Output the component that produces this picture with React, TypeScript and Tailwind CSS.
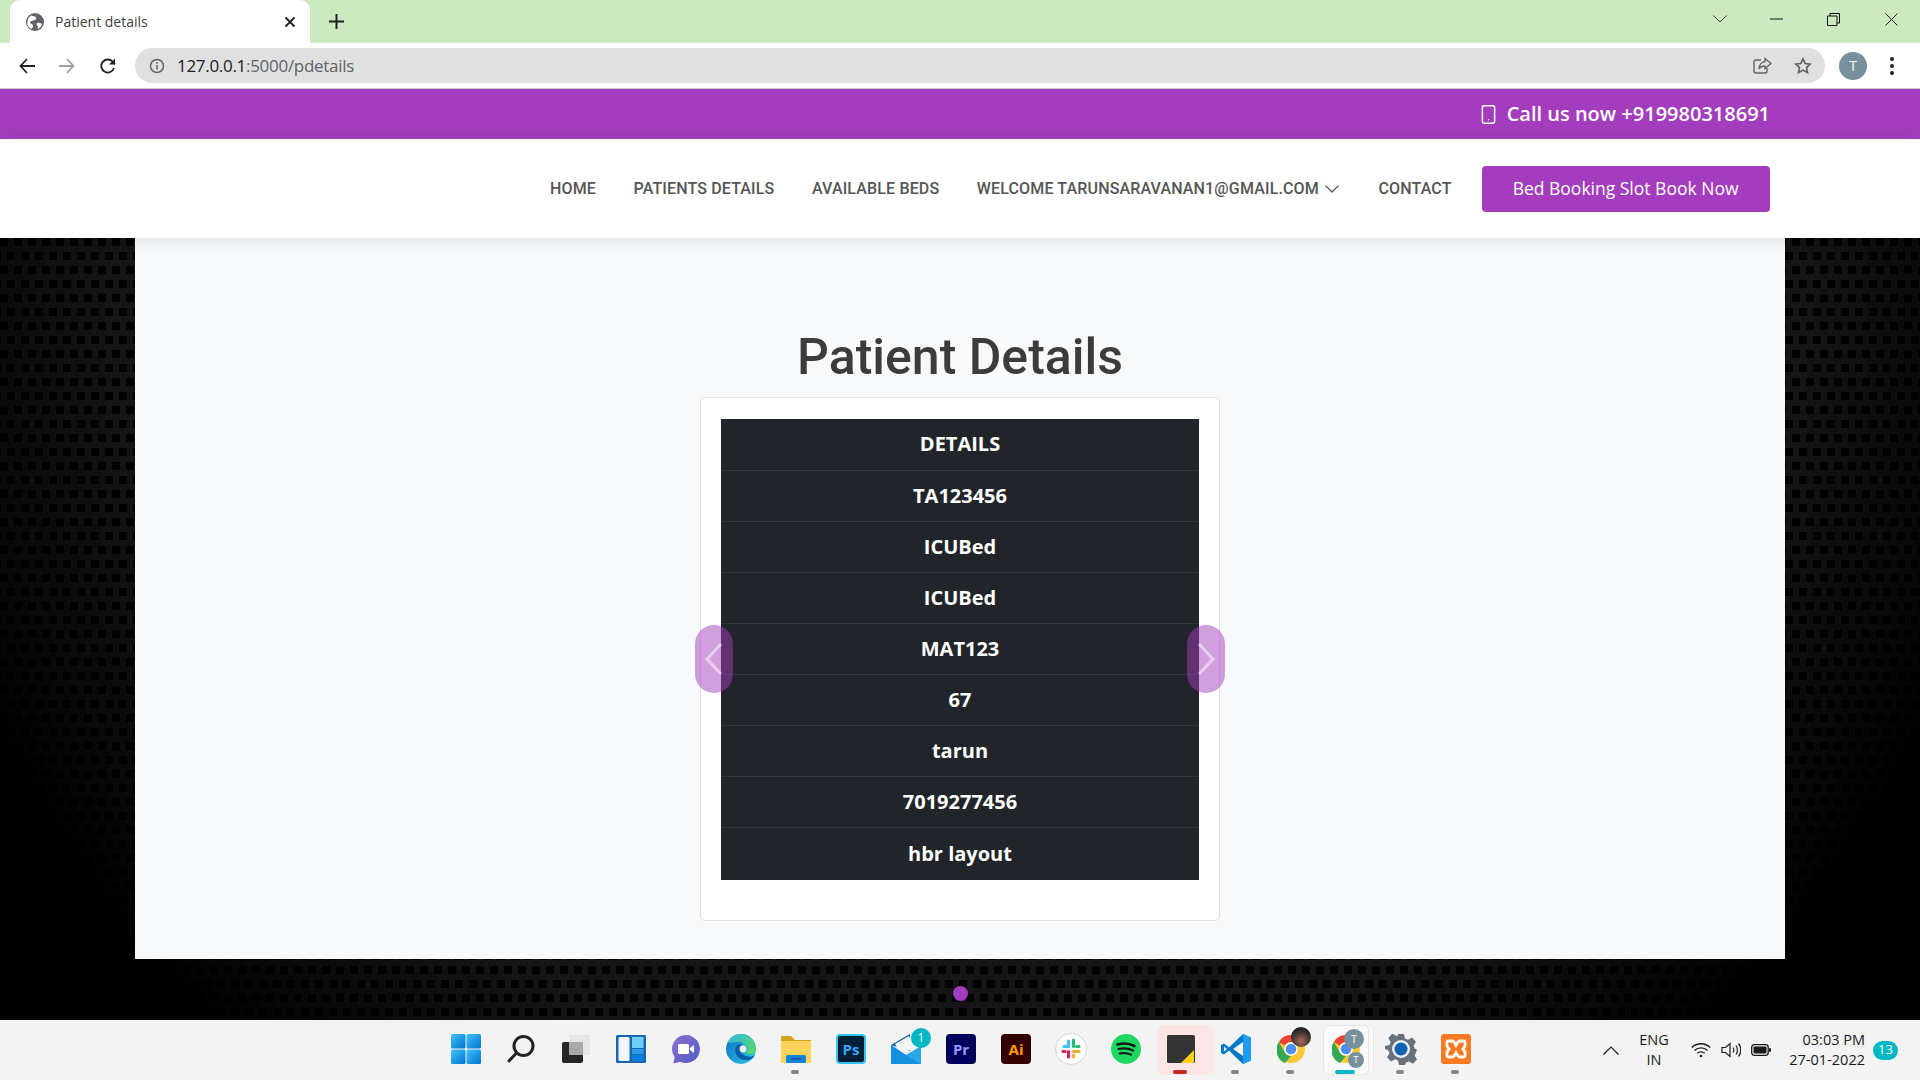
import { ChevronDown, Smartphone } from "lucide-react";

const rows = ["DETAILS", "TA123456", "ICUBed", "ICUBed", "MAT123", "67", "tarun", "7019277456", "hbr layout"];

const navLinks = ["HOME", "PATIENTS DETAILS", "AVAILABLE BEDS"];

const WindowsIcon = () => (
  <svg width="30" height="30" viewBox="0 0 30 30">
    <defs>
      <linearGradient id="win" x1="0" y1="0" x2="1" y2="1">
        <stop offset="0" stopColor="#3fc3f7" />
        <stop offset="1" stopColor="#0372cf" />
      </linearGradient>
    </defs>
    <rect x="0" y="0" width="14.5" height="14.5" rx="1.5" fill="url(#win)" />
    <rect x="15.5" y="0" width="14.5" height="14.5" rx="1.5" fill="url(#win)" />
    <rect x="0" y="15.5" width="14.5" height="14.5" rx="1.5" fill="url(#win)" />
    <rect x="15.5" y="15.5" width="14.5" height="14.5" rx="1.5" fill="url(#win)" />
  </svg>
);

const SearchIcon = () => (
  <svg width="30" height="30" viewBox="0 0 30 30" fill="none" stroke="#222" strokeWidth="3" strokeLinecap="round">
    <circle cx="17.5" cy="12" r="9.5" />
    <path d="M10.5 19 3 27" />
  </svg>
);

const TaskViewIcon = () => (
  <svg width="30" height="30" viewBox="0 0 30 30">
    <rect x="1" y="8" width="21" height="21" rx="2" fill="#262626" />
    <rect x="8" y="1" width="21" height="20" rx="1.5" fill="#e4e4e4" fillOpacity="0.9" />
    <rect x="8" y="8" width="14" height="13" fill="#a9a9a9" />
  </svg>
);

const WidgetsIcon = () => (
  <svg width="30" height="30" viewBox="0 0 30 30">
    <rect x="0" y="1" width="30" height="28" rx="1.5" fill="#1666b0" />
    <rect x="2.5" y="3" width="11" height="24" rx="1.5" fill="#f3f5f8" />
    <rect x="16" y="3" width="11.5" height="11" fill="#6ed0f7" />
    <rect x="16" y="15" width="11.5" height="5" fill="#2c9be8" />
    <rect x="16" y="21" width="11.5" height="6" fill="#0b7fe0" />
  </svg>
);

const ChatIcon = () => (
  <svg width="30" height="30" viewBox="0 0 30 30">
    <defs>
      <linearGradient id="chat" x1="0" y1="0" x2="1" y2="1">
        <stop offset="0" stopColor="#8f70c9" />
        <stop offset="1" stopColor="#4d5cc9" />
      </linearGradient>
    </defs>
    <path d="M15 1a14 14 0 1 1-6 26.7L2.5 29.5 3.6 23A14 14 0 0 1 15 1z" fill="url(#chat)" />
    <rect x="7" y="10" width="11" height="10" rx="1.5" fill="#fff" />
    <path d="m19 14 4-3v8l-4-3z" fill="#fff" />
  </svg>
);

const EdgeIcon = () => (
  <svg width="30" height="30" viewBox="0 0 30 30">
    <defs>
      <linearGradient id="edgeA" x1="0" y1="0" x2="1" y2="0.6">
        <stop offset="0" stopColor="#0c6fc0" />
        <stop offset="1" stopColor="#2bc2e8" />
      </linearGradient>
      <linearGradient id="edgeB" x1="0" y1="0" x2="1" y2="1">
        <stop offset="0" stopColor="#33b8e0" />
        <stop offset="1" stopColor="#5fd85f" />
      </linearGradient>
    </defs>
    <circle cx="15" cy="15" r="15" fill="url(#edgeA)" />
    <path d="M2 8C5 2 10 0 15 0c8 0 15 6 15 15 0 3-2 5-6 5-3 0-4-1-4-2 2-1 2-3 1-5-2-4-7-6-11-5-4 0-7 2-8 0z" fill="url(#edgeB)" />
    <path d="M14 10c-4 1-6 5-4 10 2 5 8 7 13 6 3-1 5-3 6-5-2 2-6 2-9 1-5-2-6-5-5-7 1-2 1-4-1-5z" fill="#0a5ea8" />
    <circle cx="17" cy="15" r="3.4" fill="#f3f3f3" />
  </svg>
);

const FolderIcon = () => (
  <svg width="30" height="30" viewBox="0 0 30 30">
    <path d="M0 3a1 1 0 0 1 1-1h9l4 4h16v3H0z" fill="#d9a21b" />
    <rect x="0" y="7" width="30" height="22" rx="1" fill="#fbd35b" />
    <rect x="5" y="21" width="20" height="8" rx="1.5" fill="#1383d8" />
    <rect x="10" y="24" width="10" height="1.5" fill="#0a4f8e" />
  </svg>
);

const AppSquare = ({ label, bg, fg, border }: { label: string; bg: string; fg: string; border?: string }) => (
  <svg width="30" height="30" viewBox="0 0 30 30">
    <rect x="1" y="1" width="28" height="28" rx="3" fill={bg} stroke={border ?? bg} strokeWidth="2" />
    <text x="15" y="21" textAnchor="middle" fontFamily="Open Sans, sans-serif" fontWeight="700" fontSize="15" fill={fg}>
      {label}
    </text>
  </svg>
);

const MailIcon = () => (
  <svg width="32" height="32" viewBox="0 0 32 32">
    <path d="M1 12 20 1v17z" fill="#0d5ea8" />
    <path d="M5 11 19 3l5 12-13 6z" fill="#f4f4f4" />
    <path d="M1 12v19h30V13L16 22z" fill="#28a8ea" />
    <path d="m1 12 15 10 15 9H1z" fill="#1490df" />
  </svg>
);

const SlackIcon = () => (
  <svg width="32" height="32" viewBox="0 0 32 32">
    <circle cx="16" cy="16" r="15.5" fill="#fff" stroke="#d5d5d5" />
    <g strokeWidth="3.2" strokeLinecap="round" fill="none">
      <path d="M13.5 8v5.5H9" stroke="#36c5f0" />
      <path d="M18.5 7v6.5" stroke="#2eb67d" />
      <path d="M24 13.5h-2.5" stroke="#2eb67d" />
      <path d="M18.5 18.5H24" stroke="#ecb22e" />
      <path d="M18.5 24v-2" stroke="#ecb22e" />
      <path d="M13.5 18.5V24" stroke="#e01e5a" />
      <path d="M8 18.5h2" stroke="#e01e5a" />
    </g>
  </svg>
);

const SpotifyIcon = () => (
  <svg width="30" height="30" viewBox="0 0 30 30" fill="none" stroke="#161616" strokeLinecap="round">
    <circle cx="15" cy="15" r="15" fill="#1ed760" stroke="none" />
    <path d="M6.5 10.5c6-1.7 12-1.2 17 1.5" strokeWidth="2.6" />
    <path d="M7.5 15c5-1.3 10-.8 14.5 1.5" strokeWidth="2.2" />
    <path d="M8.5 19.500c4-1 8-.6 11.500 1.200" strokeWidth="1.900" />
  </svg>
);

const StickyIcon = () => (
  <svg width="28" height="28" viewBox="0 0 28 28">
    <rect x="0" y="0" width="28" height="28" rx="1.5" fill="#333" />
    <path d="M14 28 27 15v12a1 1 0 0 1-1 1z" fill="#fcd116" />
  </svg>
);

const VSCodeIcon = () => (
  <svg width="30" height="30" viewBox="0 0 30 30">
    <path d="M22 0 30 3.500v23L22 30 8 16.500l-5 4-3-1.500v-8l3-1.500 5 4z" fill="#0078c8" />
    <path d="M22 0 30 3.500v23L22 30z" fill="#1f9cf0" />
    <path d="M22 8 12 15l10 7z" fill="#f3f3f3" />
    <path d="M3 12.500v5l3-2.500z" fill="#f3f3f3" />
  </svg>
);

const ChromeIcon = () => (
  <svg width="28" height="28" viewBox="0 0 28 28">
    <circle cx="14" cy="14" r="14" fill="#fcc934" />
    <path d="M14 0a14 14 0 0 1 12.100 7H14a7 7 0 0 0-6.100 3.500L1.900 7A14 14 0 0 1 14 0z" fill="#ea4335" />
    <path d="M1.900 7l6 10.500a7 7 0 0 0 6.100 3.500L8 28A14 14 0 0 1 1.900 7z" fill="#34a853" />
    <circle cx="14" cy="14" r="6.800" fill="#fff" />
    <circle cx="14" cy="14" r="5.300" fill="#4f8ef3" />
  </svg>
);

const SettingsIcon = () => (
  <svg width="32" height="32" viewBox="0 0 32 32">
    <path
      d="M13 1h6l1 4.500 3 1.300 4-2.400 4 4.300-2.400 4 1.200 3L32 16.500v0L30.800 20l-1.200 2.500 2.400 4-4 4.300-4-2.400-3 1.200-1 2.400h-6l-1-4.500-3-1.300-4 2.400-4-4.300 2.400-4-1.200-3L0 16v-3l4.500-1 1.200-3-2.400-4 4-4.300 4 2.400 1.700-.6z"
      fill="#69727c"
    />
    <circle cx="16" cy="16" r="9" fill="#e9edf1" />
    <circle cx="16" cy="16" r="6.500" fill="#0f62ad" />
  </svg>
);

const XamppIcon = () => (
  <svg width="30" height="30" viewBox="0 0 30 30">
    <rect width="30" height="30" rx="3" fill="#fb7a24" />
    <path
      d="M8 7h3c2 0 3 2 4 4 1-2 2-4 4-4h3c3 0 3 5 0 8 3 3 3 8 0 8h-3c-2 0-3-2-4-4-1 2-2 4-4 4H8c-3 0-3-5 0-8-3-3-3-8 0-8z"
      fill="none"
      stroke="#fff"
      strokeWidth="2.800"
    />
  </svg>
);

const TaskItem = ({
  children,
  dot,
  badge,
  tile,
}: {
  children: React.ReactNode;
  dot?: "gray" | "red" | "teal";
  badge?: React.ReactNode;
  tile?: "pink" | "white";
}) => (
  <div className="relative flex h-full w-[55px] shrink-0 items-center justify-center pb-[2px]">
    {tile === "pink" && (
      <>
        <div className="absolute left-[12px] top-[5px] h-[50px] w-[50px] rounded-[5px] bg-[#fbeaea]" />
        <div className="absolute left-[5px] top-[5px] h-[50px] w-[50px] rounded-[5px] bg-[#fde5e6]" />
      </>
    )}
    {tile === "white" && (
      <>
        <div className="absolute left-[8px] top-[5px] h-[50px] w-[48px] rounded-[5px] border border-[#e9e9e9] bg-[#f8f8f8]" />
        <div className="absolute left-[5px] top-[5px] h-[50px] w-[46px] rounded-[5px] border border-[#e6e6e6] bg-[#f9f9f9]" />
      </>
    )}
    <div className="relative">{children}</div>
    {badge}
    {dot === "gray" && <div className="absolute bottom-[6px] left-[23px] h-[4px] w-[8px] rounded-full bg-[#858585]" />}
    {dot === "red" && <div className="absolute bottom-[6px] left-[20px] h-[4px] w-[14px] rounded-full bg-[#c42b1c]" />}
    {dot === "teal" && <div className="absolute bottom-[6px] left-[17px] h-[4px] w-[20px] rounded-full bg-[#00b7c3]" />}
  </div>
);

const ChromeTabBar = () => (
  <div className="flex h-[43px] items-end bg-[#cce9bf] pl-[10px]">
    <div className="flex h-[43px] w-[300px] items-center rounded-t-[10px] bg-white pl-[16px] pr-[14px]">
      <svg width="18" height="18" viewBox="0 0 18 18">
        <circle cx="9" cy="9" r="9" fill="#5f6368" />
        <path d="M5 2.500c2 1 4 .5 5 2s-1 2.500-2.500 3-3.500.5-3.500 2 2.500 1 3 3-1 3-1.500 3.500A7.500 7.500 0 0 1 1.500 8C2 5.500 3.500 3.500 5 2.500z" fill="#fff" />
        <path d="M11 10c1.500-.5 3.500 0 5 1-.5 2-2 4-4 5-1-1 .5-2-.5-3s-1.500-2-.5-3z" fill="#fff" />
      </svg>
      <span className="ml-[11px] pb-[1px] font-['Open_Sans',sans-serif] text-[14px] text-[#3c4043]">Patient details</span>
      <svg className="ml-auto" width="12" height="12" viewBox="0 0 12 12" stroke="#202124" strokeWidth="1.900">
        <path d="m1.500 1.500 9 9M10.500 1.500l-9 9" />
      </svg>
    </div>
    <svg className="mb-[14px] ml-[19px]" width="15" height="15" viewBox="0 0 15 15" stroke="#202124" strokeWidth="2">
      <path d="M7.500 0v15M0 7.500h15" />
    </svg>
    <div className="ml-auto flex h-[43px] items-center pb-[5px] pr-[22px]">
      <svg width="14" height="8" viewBox="0 0 14 8" fill="none" stroke="#3a3a3a">
        <path d="m.5.500 6.500 6.500 6.500-6.500" />
      </svg>
      <svg className="ml-[43px]" width="13" height="2" viewBox="0 0 13 2" stroke="#111">
        <path d="M0 1h13" />
      </svg>
      <svg className="ml-[44px]" width="13" height="13" viewBox="0 0 13 13" fill="none" stroke="#111">
        <path d="M.5 3h9.500v9.500H.5zM3 3V.5h9.500V10H10" />
      </svg>
      <svg className="ml-[45px]" width="13" height="13" viewBox="0 0 13 13" fill="none" stroke="#222">
        <path d="m.5.500 12 12M12.500.500l-12 12" />
      </svg>
    </div>
  </div>
);

const ChromeToolbar = () => (
  <div className="flex h-[46px] items-center border-b border-[#c9c9c9] bg-white">
    <div className="flex w-[135px] shrink-0 items-center pl-[19px]">
      <svg width="16" height="16" viewBox="0 0 16 16" fill="none" stroke="#202124" strokeWidth="1.800">
        <path d="M16 8H1.500M8 1 1.500 8 8 15" />
      </svg>
      <svg className="ml-[24px]" width="16" height="16" viewBox="0 0 16 16" fill="none" stroke="#9aa0a6" strokeWidth="1.800">
        <path d="M0 8h14.500M8 1l6.500 7L8 15" />
      </svg>
      <svg className="ml-[25px]" width="16" height="16" viewBox="0 0 16 16" fill="none" stroke="#202124" strokeWidth="1.800">
        <path d="M14 10a6.500 6.500 0 1 1-1.500-6.500L15 6" />
        <path d="M15 .500V6.500H9" fill="#202124" stroke="none" />
      </svg>
    </div>
    <div className="flex h-[35px] w-[1690px] shrink-0 items-center rounded-full bg-[#e0e0e0] pl-[14px] pr-[13px]">
      <svg width="16" height="16" viewBox="0 0 16 16" fill="none" stroke="#5f6368" strokeWidth="1.500">
        <circle cx="8" cy="8" r="6.500" />
        <path d="M8 7v4.500M8 4v1.700" />
      </svg>
      <span className="ml-[12px] font-['Open_Sans',sans-serif] text-[17px] tracking-[-0.3px] text-[#202124]">
        127.0.0.1<span className="text-[#5f6368]">:5000/pdetails</span>
      </span>
      <svg className="ml-auto" width="19" height="18" viewBox="0 0 19 18" fill="none" stroke="#5f6368" strokeWidth="1.400">
        <path d="M8 3H3a2 2 0 0 0-2 2v9a2 2 0 0 0 2 2h9a2 2 0 0 0 2-2v-3" />
        <path d="M12 1.500 18 6.500l-6 5V9c-3 0-5 1-6 3 0-4 2.500-7 6-7.500z" />
      </svg>
      <svg className="ml-[22px]" width="18" height="18" viewBox="0 0 18 18" fill="none" stroke="#5f6368" strokeWidth="1.700">
        <path d="m9 1.800 2.200 4.700 5 .6-3.700 3.500 1 5L9 13.100l-4.500 2.500 1-5L1.800 7.100l5-.6z" />
      </svg>
    </div>
    <div className="ml-[14px] flex h-[28px] w-[28px] shrink-0 items-center justify-center rounded-full bg-[#78909c] font-['Open_Sans',sans-serif] text-[14px] text-white">
      T
    </div>
    <div className="ml-[23px] flex flex-col gap-[3px]">
      <div className="h-[4px] w-[4px] rounded-full bg-[#202124]" />
      <div className="h-[4px] w-[4px] rounded-full bg-[#202124]" />
      <div className="h-[4px] w-[4px] rounded-full bg-[#202124]" />
    </div>
  </div>
);

const Taskbar = () => (
  <div className="flex h-[60px] shrink-0 items-center bg-[#f3f3f3] pl-[438px] text-[#1b1b1b]">
    <TaskItem><WindowsIcon /></TaskItem>
    <TaskItem><SearchIcon /></TaskItem>
    <TaskItem><TaskViewIcon /></TaskItem>
    <TaskItem><WidgetsIcon /></TaskItem>
    <TaskItem><ChatIcon /></TaskItem>
    <TaskItem><EdgeIcon /></TaskItem>
    <TaskItem dot="gray"><FolderIcon /></TaskItem>
    <TaskItem><AppSquare label="Ps" bg="#001e36" fg="#31a8ff" border="#31c5f4" /></TaskItem>
    <TaskItem
      badge={
        <div className="absolute left-[33px] top-[8px] flex h-[20px] w-[20px] items-center justify-center rounded-full bg-[#00b7c3] font-['Open_Sans',sans-serif] text-[12px] text-white">
          1
        </div>
      }
    >
      <MailIcon />
    </TaskItem>
    <TaskItem><AppSquare label="Pr" bg="#00005b" fg="#9999ff" /></TaskItem>
    <TaskItem><AppSquare label="Ai" bg="#330000" fg="#ff9a00" /></TaskItem>
    <TaskItem><SlackIcon /></TaskItem>
    <TaskItem><SpotifyIcon /></TaskItem>
    <TaskItem dot="red" tile="pink"><StickyIcon /></TaskItem>
    <TaskItem dot="gray"><VSCodeIcon /></TaskItem>
    <TaskItem
      dot="gray"
      badge={<div className="absolute left-[28px] top-[7px] h-[20px] w-[20px] rounded-full bg-[radial-gradient(circle_at_50%_70%,#b06a5a_0,#4a3a38_45%,#222_70%)]" />}
    >
      <ChromeIcon />
    </TaskItem>
    <TaskItem
      dot="teal"
      tile="white"
      badge={
        <>
          <div className="absolute left-[26px] top-[9px] flex h-[20px] w-[20px] items-center justify-center rounded-full bg-[#78909c] font-['Open_Sans',sans-serif] text-[11px] text-white">
            T
          </div>
          <div className="absolute left-[30px] top-[32px] flex h-[16px] w-[16px] items-center justify-center rounded-full bg-[#78909c] font-['Open_Sans',sans-serif] text-[9px] text-white">
            T
          </div>
        </>
      }
    >
      <ChromeIcon />
    </TaskItem>
    <TaskItem dot="gray"><SettingsIcon /></TaskItem>
    <TaskItem dot="gray"><XamppIcon /></TaskItem>

    <div className="ml-auto flex h-full items-center pr-[22px] font-['Open_Sans',sans-serif] text-[14.5px]">
      <svg width="16" height="9" viewBox="0 0 16 9" fill="none" stroke="#1b1b1b" strokeWidth="1.200">
        <path d="m.5 8.500 7.500-7.500 7.500 7.500" />
      </svg>
      <div className="ml-[20px] w-[30px] text-center leading-[20px]">
        <div>ENG</div>
        <div>IN</div>
      </div>
      <svg className="ml-[22px]" width="20" height="16" viewBox="0 0 20 16" fill="none" stroke="#1b1b1b" strokeWidth="1.300">
        <path d="M.8 5.500c5-5 13.400-5 18.400 0M3.500 8.500c3.500-3.500 9.500-3.500 13 0M6.300 11.300c2-2 5.400-2 7.400 0" />
        <circle cx="10" cy="14" r="1.300" fill="#1b1b1b" stroke="none" />
      </svg>
      <svg className="ml-[10px]" width="20" height="16" viewBox="0 0 20 16" fill="none" stroke="#1b1b1b" strokeWidth="1.200">
        <path d="M1 5.500h3.500L9 1.500v13l-4.500-4H1z" />
        <path d="M12 5.500c1 1.500 1 3.500 0 5M15 3.500c2 2.500 2 6.500 0 9M17.500 1.500c3 3.500 3 9.500 0 13" />
      </svg>
      <svg className="ml-[10px]" width="20" height="12" viewBox="0 0 20 12">
        <rect x=".7" y=".7" width="16.500" height="10.600" rx="2.500" fill="none" stroke="#1b1b1b" strokeWidth="1.300" />
        <rect x="2.500" y="2.500" width="13" height="7" rx="1" fill="#1b1b1b" />
        <rect x="18" y="4" width="2" height="4" rx="1" fill="#1b1b1b" />
      </svg>
      <div className="ml-[18px] w-[76px] whitespace-nowrap text-right leading-[20px]">
        <div>03:03 PM</div>
        <div>27-01-2022</div>
      </div>
      <div className="ml-[8px] flex h-[19px] w-[25px] items-center justify-center rounded-full bg-[#00b7c3] text-[13px] text-white">
        13
      </div>
    </div>
  </div>
);

export default function App() {
  return (
    <div className="flex h-[1080px] w-[1920px] flex-col overflow-hidden bg-white">
      <ChromeTabBar />
      <ChromeToolbar />

      {/* top bar */}
      <div className="flex h-[50px] shrink-0 items-center justify-end bg-[#a33dbd] pr-[150px] font-['Open_Sans',sans-serif] text-[20px] font-semibold text-white">
        <Smartphone className="mr-[8px] h-[21px] w-[21px]" strokeWidth={1.700} />
        Call us now +919980318691
      </div>

      {/* nav */}
      <header className="relative z-10 flex h-[99px] shrink-0 items-center bg-white pl-[550px] shadow-[0_2px_15px_rgba(0,0,0,0.1)] font-['Roboto',sans-serif] text-[16px] font-medium tracking-[0.15px] text-[#555]">
        <nav className="flex items-center gap-[37.5px]">
          {navLinks.map((link) => (
            <a key={link}>{link}</a>
          ))}
          <a className="flex items-center">
            WELCOME TARUNSARAVANAN1@GMAIL.COM
            <ChevronDown className="ml-[1px] mr-[-3px] h-[24px] w-[24px]" strokeWidth={1.200} />
          </a>
          <a>CONTACT</a>
        </nav>
        <button className="ml-[30px] h-[46px] w-[288px] rounded-[4px] bg-[#a33dbd] font-['Open_Sans',sans-serif] text-[17.5px] font-normal tracking-normal text-white">
          Bed Booking Slot Book Now
        </button>
      </header>

      {/* main, perforated metal background */}
      <main className="relative min-h-0 flex-1 bg-[#151515] bg-[conic-gradient(from_270deg_at_8px_8px,#000_25%,transparent_0),conic-gradient(from_270deg_at_8px_8px,#000_25%,transparent_0)] bg-[length:14px_28px] bg-[position:0_0,7px_14px]">
        <div className="absolute inset-0 bg-[radial-gradient(circle_1090px_at_50%_0,transparent_78%,#000_100%)]" />
        <div className="relative mx-[135px] flex h-[721px] flex-col items-center bg-[#f8f9fa] pt-[89px]">
          <h1 className="h-[70px] font-['Roboto',sans-serif] text-[50px] font-medium leading-[60px] text-[#3c3c3c]">
            Patient Details
          </h1>
          <div className="relative w-[520px] rounded-[5px] border border-[#dfdfdf] bg-white px-[20px] pb-[40px] pt-[21px]">
            <table className="w-full border-collapse bg-[#212529] font-['Open_Sans',sans-serif] text-[20px] font-bold text-white">
              <tbody>
                {rows.map((row, index) => (
                  <tr key={index} className={index === 8 ? "h-[53px]" : "h-[51px] border-b border-[#32383e]"}>
                    <td className="p-0 text-center">{row}</td>
                  </tr>
                ))}
              </tbody>
            </table>
            <button className="absolute left-[-6px] top-[227px] flex h-[68px] w-[38px] items-center justify-center rounded-[20px] bg-[#a33dbd]/50">
              <svg width="18" height="32" viewBox="0 0 18 32" fill="none" stroke="#fff" strokeOpacity="0.5" strokeWidth="3">
                <path d="M16 1 2 16l14 15" />
              </svg>
            </button>
            <button className="absolute right-[-6px] top-[227px] flex h-[68px] w-[38px] items-center justify-center rounded-[20px] bg-[#a33dbd]/50">
              <svg width="18" height="32" viewBox="0 0 18 32" fill="none" stroke="#fff" strokeOpacity="0.5" strokeWidth="3">
                <path d="m2 1 14 15L2 31" />
              </svg>
            </button>
          </div>
        </div>
        <div className="relative flex justify-center pt-[27px]">
          <div className="h-[15px] w-[15px] rounded-full bg-[#a33dbd]" />
        </div>
      </main>

      <Taskbar />
    </div>
  );
}
